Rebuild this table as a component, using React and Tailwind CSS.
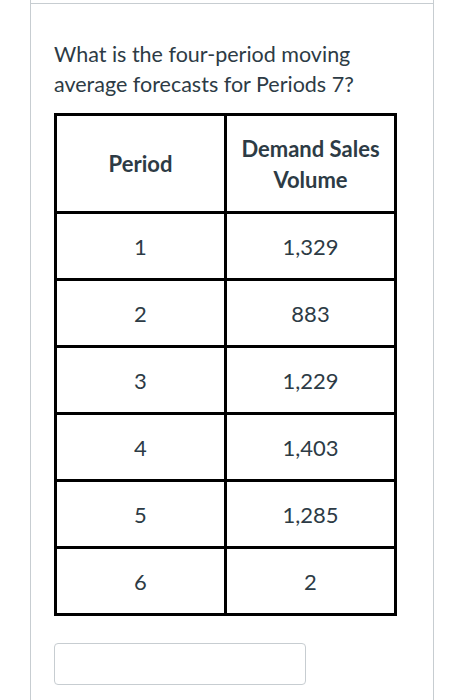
const ROWS = [
  ["1", "1,329"],
  ["2", "883"],
  ["3", "1,229"],
  ["4", "1,403"],
  ["5", "1,285"],
  ["6", "2"],
];

export default function App() {
  return (
    <div className="w-[456px] h-[700px] bg-white overflow-hidden" style={{ fontFamily: "Lato, 'Open Sans', sans-serif" }}>
      <div className="ml-[30px] w-[404px] h-full border-x border-[#c7cdd1]">
        {/* previous section edge */}
        <div className="h-[3px]" />
        <div className="border-t border-[#c7cdd1] pl-[23px] pt-[35px]">
          <p className="text-[21.5px] leading-[30px] text-[#2d3b45]">
            What is the four-period moving
            <br />
            average forecasts for Periods 7?
          </p>

          {/* Data table */}
          <div className="mt-[14px] w-[343px] bg-black p-[3px] grid grid-cols-2 gap-[3px] text-[#2d3b45] text-[22px]">
            <div className="bg-white h-[95px] flex items-center justify-center font-bold">Period</div>
            <div className="bg-white h-[95px] flex items-center justify-center font-bold text-center leading-[31px]">
              Demand Sales
              <br />
              Volume
            </div>
            {ROWS.map(([p, v]) => (
              <div key={p} className="contents">
                <div className="bg-white h-[64px] flex items-center justify-center">{p}</div>
                <div className="bg-white h-[64px] flex items-center justify-center">{v}</div>
              </div>
            ))}
          </div>

          <input
            type="text"
            className="mt-[27px] block w-[252px] h-[42px] border border-[#c7cdd1] rounded-[4px] bg-white outline-none"
          />
        </div>
      </div>
    </div>
  );
}
